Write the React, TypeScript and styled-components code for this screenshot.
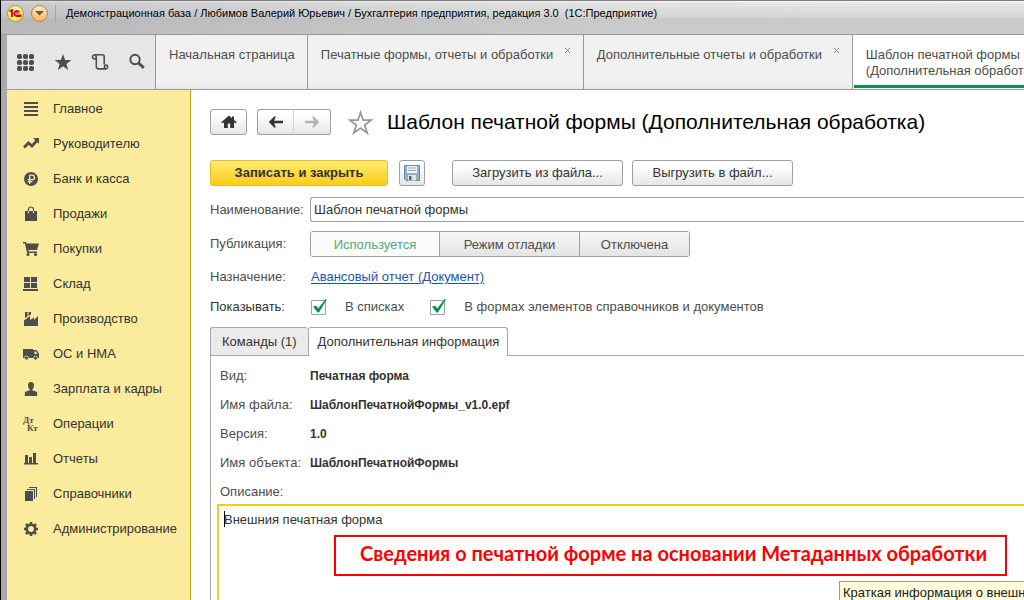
import React from 'react';
import styled, { createGlobalStyle, css } from 'styled-components';

const GlobalStyle = createGlobalStyle`
  *, *::before, *::after { box-sizing: border-box; }
  html, body { margin: 0; padding: 0; overflow: hidden; }
  body, button, input, textarea {
    font-family: "Liberation Sans", Arial, sans-serif;
    font-size: 13px;
    line-height: 16px;
  }
  body { color: #4d4d4d; background: #fff; }
`;

const Window = styled.div`
  display: flex;
  flex-direction: column;
  height: 100vh;
  overflow: hidden;
  border-left: 1px solid #000;
  background: #fff;
`;

const TitleBar = styled.header`
  display: flex;
  align-items: center;
  flex: none;
  height: 35px;
  padding: 0 6px 9px;
  border-top: 1px solid #807c80;
  border-bottom: 1px solid #979797;
  background:
    linear-gradient(90deg, rgba(150, 150, 156, 0.35), rgba(200, 200, 200, 0.12) 60%, rgba(255, 255, 255, 0)),
    linear-gradient(#fff 0, #e8e8e8 2px, #d4d5d5 17px, #c8c9c9 17px, #cdcdcd 100%);
`;

const RoundButton = styled.button<{ $kind: 'logo' | 'menu' }>`
  display: flex;
  align-items: center;
  justify-content: center;
  flex: none;
  width: 17px;
  height: 17px;
  padding: 0;
  margin-right: 7px;
  border-radius: 50%;
  border: 1px solid ${(p) => (p.$kind === 'logo' ? '#b98a4e' : '#b08050')};
  background: ${(p) =>
    p.$kind === 'logo'
      ? 'radial-gradient(circle at 50% 35%, #fffbc4, #ffe93d 80%)'
      : 'linear-gradient(#ffe9c8, #fbb65c)'};
`;

const TitleDivider = styled.span`
  width: 1px;
  height: 17px;
  margin-right: 10px;
  background: #a5a5a5;
`;

const WindowTitle = styled.span`
  font-size: 11px;
  color: #000;
  white-space: pre;
`;

const Client = styled.div`
  display: flex;
  flex-direction: column;
  flex: 1;
  min-height: 0;
  border-left: 6px solid #aaa8ab;
`;

const TopBar = styled.div`
  display: flex;
  flex: none;
  height: 55px;
  border-bottom: 1px solid #9a9a9a;
  background: #f0f0f0;
`;

const Tools = styled.div`
  display: flex;
  align-items: center;
  justify-content: space-around;
  flex: none;
  width: 149px;
  border-right: 1px solid #9a9a9a;
  background: #e6e6e6;
`;

const ToolButton = styled.button`
  display: flex;
  align-items: center;
  justify-content: center;
  width: 36px;
  height: 36px;
  padding: 0;
  border: 0;
  background: none;
  color: #4d4d4d;
`;

const OpenTabs = styled.nav`
  display: flex;
  flex: 1;
  min-width: 0;
  overflow: hidden;
`;

const OpenTab = styled.div<{ $width: number; $active?: boolean }>`
  display: flex;
  justify-content: space-between;
  flex: 0 0 ${(p) => p.$width}px;
  padding: 12px 12px 0 13px;
  border-right: 1px solid #9a9a9a;
  color: #4d4d4d;
  background: linear-gradient(#f1f1f1 90%, #e6e6e6);
  ${(p) =>
    p.$active &&
    css`
      background: #fff;
      box-shadow: inset 1px -1px 0 #fff, inset 1px -4px 0 #009646;
    `}
`;

const TabLink = styled.a`
  color: inherit;
  text-decoration: none;
  white-space: pre;
`;

const CloseButton = styled.button`
  display: flex;
  width: 7px;
  height: 7px;
  padding: 0;
  border: 0;
  background: none;
`;

const Workspace = styled.div`
  display: flex;
  flex: 1;
  min-height: 0;
`;

const Sidebar = styled.nav`
  flex: none;
  width: 184px;
  padding-top: 1px;
  border-right: 1px solid #b9a30c;
  background: #faec9c;
`;

const SideItem = styled.a`
  display: flex;
  align-items: center;
  height: 35px;
  padding-left: 16px;
  color: #333;
  text-decoration: none;

  svg {
    margin-right: 14px;
    color: #4d4d4d;
  }
`;

const Form = styled.main`
  display: flex;
  flex-direction: column;
  flex: 1;
  min-width: 0;
  padding: 19px 0 0 19px;
`;

const HeadRow = styled.div`
  display: flex;
  align-items: center;
  height: 26px;
  margin-bottom: 25px;
`;

const Button = styled.button`
  display: flex;
  align-items: center;
  justify-content: center;
  height: 26px;
  padding: 0 20px;
  border: 1px solid #a0a0a0;
  border-radius: 3px;
  color: #333;
  background: linear-gradient(#fff 20%, #e6e6e6);
  white-space: nowrap;
`;

const HomeButton = styled(Button)`
  width: 37px;
  padding: 0;
  margin-right: 10px;
`;

const NavGroup = styled.div`
  display: flex;
  margin-right: 17px;
`;

const NavButton = styled(Button)<{ $side: 'left' | 'right' }>`
  width: 37px;
  padding: 0;
  ${(p) =>
    p.$side === 'left'
      ? 'border-radius: 3px 0 0 3px; border-right-color: #d4d4d4;'
      : 'border-radius: 0 3px 3px 0; border-left: 0;'}
`;

const StarButton = styled(ToolButton)`
  width: 25px;
  height: 26px;
  margin-right: 14px;
`;

const Heading = styled.h1`
  margin: 0;
  font-size: 21px;
  font-weight: 400;
  line-height: 26px;
  color: #000;
  white-space: nowrap;
`;

const CommandRow = styled.div`
  display: flex;
  margin-bottom: 11px;
`;

const PrimaryButton = styled(Button)`
  width: 178px;
  margin-right: 11px;
  border-color: #f2bb1c;
  font-weight: 700;
  background: linear-gradient(#ffec70, #fbcb1b);
`;

const SaveButton = styled(Button)`
  width: 26px;
  padding: 0;
  margin-right: 27px;
`;

const FileButton = styled(Button)<{ $width: number }>`
  width: ${(p) => p.$width}px;
  margin-right: 9px;
`;

const Field = styled.div<{ $height: number; $gap?: number }>`
  display: flex;
  align-items: center;
  flex: none;
  height: ${(p) => p.$height}px;
  margin-bottom: ${(p) => p.$gap ?? 0}px;
`;

const labelStyle = css`
  flex: none;
  width: 100px;
  white-space: nowrap;
`;

const Label = styled.label`
  ${labelStyle}
`;

const Caption = styled.span<{ $dark?: boolean }>`
  ${labelStyle}
  color: ${(p) => (p.$dark ? '#333' : 'inherit')};
`;

const TextInput = styled.input`
  flex: 1;
  min-width: 0;
  height: 25px;
  padding: 0 3px;
  border: 1px solid #a0a0a0;
  border-right: 0;
  border-radius: 3px 0 0 3px;
  color: #333;
  background: #fff;
  outline: 0;
`;

const Segments = styled.div`
  display: flex;
  border: 1px solid #a0a0a0;
  border-radius: 3px;
  overflow: hidden;
`;

const Segment = styled.button<{ $width: number; $selected?: boolean }>`
  width: ${(p) => p.$width}px;
  height: 24px;
  padding: 2px 0 0;
  border: 0;
  color: ${(p) => (p.$selected ? '#4fad79' : '#4d4d4d')};
  background: ${(p) => (p.$selected ? '#fbfbfb' : 'linear-gradient(#f7f7f7, #e4e4e4)')};

  & + & { border-left: 1px solid #a0a0a0; }
`;

const DocumentLink = styled.a`
  margin-left: 1px;
  color: #1a55b5;
  text-decoration: underline;
  text-underline-offset: 2px;
`;

const CheckLabel = styled.label`
  display: flex;
  align-items: center;
  margin: 0 25px 0 1px;
  white-space: nowrap;
`;

const CheckBox = styled.span`
  position: relative;
  display: flex;
  margin-right: 19px;

  svg {
    position: absolute;
    left: 0;
    top: -2px;
    pointer-events: none;
  }
`;

const CheckInput = styled.input`
  appearance: none;
  width: 15px;
  height: 15px;
  margin: 0;
  border: 1px solid #a0a0a0;
  border-radius: 1px;
  background: #fff;
`;

const PageTabs = styled.div`
  display: flex;
  flex: none;
  border-bottom: 1px solid #a8a8a8;
`;

const PageTab = styled.button<{ $active?: boolean }>`
  height: 28px;
  padding: 0 11px;
  border: 1px solid #a8a8a8;
  border-bottom: 0;
  border-radius: 3px 3px 0 0;
  color: #333;
  background: #ebebeb;

  &:first-child { border-right: 0; }

  ${(p) =>
    p.$active &&
    css`
      height: 29px;
      padding: 0 8px 0 9px;
      margin-bottom: -1px;
      background: #fff;
    `}
`;

const TabPanel = styled.section`
  display: flex;
  flex-direction: column;
  flex: 1;
  min-height: 0;
  padding: 5px 0 0 6px;
  border-left: 1px solid #a8a8a8;
`;

const Details = styled.dl`
  flex: none;
  margin: 0;
  padding-left: 3px;
`;

const Detail = styled.div`
  display: flex;
  align-items: center;
  height: 29px;

  dt { flex: none; width: 90px; white-space: nowrap; }
  dd { margin: 0; font-size: 12px; font-weight: 700; color: #333; }
`;

const DescriptionLabel = styled.label`
  flex: none;
  height: 27px;
  padding: 7px 0 0 3px;
`;

const DescriptionBox = styled.div`
  position: relative;
  display: flex;
  flex: 1;
  min-height: 0;
`;

const Description = styled.textarea`
  flex: 1;
  min-width: 0;
  padding: 6px 5px;
  border: 2px solid #facb1f;
  border-right: 0;
  border-bottom: 0;
  color: #333;
  background: #fff;
  resize: none;
  outline: 0;
`;

const Caret = styled.span`
  position: absolute;
  left: 7px;
  top: 7px;
  width: 1px;
  height: 16px;
  background: #000;
`;

const Callout = styled.div`
  position: absolute;
  left: 117px;
  top: 31px;
  padding: 3px 18px 8px 24px;
  border: 2px solid #f00;
  font-family: Lato, "Open Sans", sans-serif;
  font-size: 20px;
  font-weight: 700;
  line-height: 26px;
  color: #f00;
  background: #fff;
  white-space: nowrap;
`;

const Tooltip = styled.div`
  position: absolute;
  left: 622px;
  top: 77px;
  padding: 3px;
  border: 1px solid #a09c80;
  color: #1a1a1a;
  background: #fffbdc;
  white-space: nowrap;
`;

const Icon = ({ size = 16, children }: { size?: number; children: React.ReactNode }) => (
  <svg width={size} height={size} viewBox={`0 0 ${size} ${size}`} fill="currentColor" aria-hidden="true">
    {children}
  </svg>
);

const stroke = (width: number) => ({ fill: 'none', stroke: 'currentColor', strokeWidth: width });

const GridIcon = () => (
  <Icon size={18}>
    {[2, 8, 14].map((y) =>
      [2, 8, 14].map((x) => <rect key={`${x}-${y}`} x={x - 2} y={y - 1} width={5} height={5} rx={1.8} />)
    )}
  </Icon>
);

const StarIcon = () => (
  <Icon size={18}>
    <path d="M9 1l2.1 5.9 6.2.1-4.9 3.9 1.8 6L9 13.3 3.8 16.9l1.8-6L.7 7l6.2-.1z" />
  </Icon>
);

const HistoryIcon = () => (
  <Icon size={18}>
    <path
      {...stroke(1.6)}
      d="M4.6 5.6C2.6 6.4 1 5 1.6 3.3C2 1.9 3.2 1.7 4.2 1.7H11.4C12.6 1.7 13.2 2.5 13.2 3.6V11.6M4.3 2C5.2 2.6 5.3 3.4 5.3 4.6V13.6C5.3 15.2 6.2 15.9 7.6 15.9H14.4C16.6 15.9 17.2 13.9 16.3 12.7C15.5 11.6 13.6 11.9 13.5 13.3C13.4 14.5 13.8 15.3 14.4 15.9"
    />
  </Icon>
);

const SearchIcon = () => (
  <Icon size={18}>
    <circle cx="7" cy="6.5" r="4.7" {...stroke(1.9)} />
    <path d="M10.5 10l5.3 4.9" {...stroke(2.8)} />
  </Icon>
);

const CloseIcon = () => (
  <svg width="7" height="7" viewBox="0 0 7 7" aria-hidden="true">
    <path d="M1 1l5 5M6 1L1 6" stroke="#8a8a8a" strokeWidth="1" />
  </svg>
);

const sections: { title: string; icon: React.ReactNode }[] = [
  { title: 'Главное', icon: <path d="M1 1h14v2H1zM1 5h14v2H1zM1 9h14v2H1zM1 13h14v2H1z" /> },
  {
    title: 'Руководителю',
    icon: (
      <>
        <path d="M1 11.500l4.500-4.500 3.500 3 4.500-5" {...stroke(2.8)} />
        <path d="M10 2H16v6z" />
      </>
    ),
  },
  {
    title: 'Банк и касса',
    icon: (
      <>
        <circle cx="8" cy="8" r="7" />
        <path d="M6.700 13V4.200h2.500a2.200 2.200 0 0 1 0 4.500H4.700M4.700 10.700h4.600" fill="none" stroke="#faec9c" strokeWidth="1.300" />
      </>
    ),
  },
  {
    title: 'Продажи',
    icon: (
      <>
        <path d="M2 5h12v10H2z" />
        <path d="M5.500 5V3.500a2.500 2.500 0 0 1 5 0V5" {...stroke(1.200)} />
        <path d="M5.500 5v2.200M10.500 5v2.200" stroke="#faec9c" strokeWidth="1.100" />
      </>
    ),
  },
  {
    title: 'Покупки',
    icon: (
      <>
        <path d="M0 1h3l.6 1.500H16L14 9H5.300l.4 1.500H14V12H4L2 2.400H0z" />
        <circle cx="5" cy="13.500" r="1.600" />
        <circle cx="12.500" cy="13.500" r="1.600" />
      </>
    ),
  },
  { title: 'Склад', icon: <path d="M1 1h6v5H1zM8 1h6v5H8zM1 7h6v5H1zM8 7h6v5H8zM0 13h15v2H0z" /> },
  {
    title: 'Производство',
    icon: (
      <>
        <path d="M1 15V9.500L7 5v4l4-2.500V9l4-4v10z" />
        <path d="M2 1h2.500v4.500L2 7zM5.500 1H8v2.500L5.500 5z" />
      </>
    ),
  },
  {
    title: 'ОС и НМА',
    icon: (
      <>
        <path fillRule="evenodd" d="M0 3h10v1h3.500L16 7.500V12H0zM11.500 5.500V8h3L13 5.500z" />
        <circle cx="3.500" cy="12" r="2" stroke="#faec9c" strokeWidth=".7" />
        <circle cx="12.500" cy="12" r="2" stroke="#faec9c" strokeWidth=".7" />
      </>
    ),
  },
  {
    title: 'Зарплата и кадры',
    icon: <path d="M8 1c2.100 0 3 1.400 3 3.200C11 6 10.200 7.800 9.300 8.300v1l3.700 1.200c.9.300 1.200 1 1.200 2.200V15H1.800v-2.300c0-1.200.3-1.900 1.200-2.200l3.700-1.200v-1C5.800 7.800 5 6 5 4.200 5 2.400 5.900 1 8 1z" />,
  },
  {
    title: 'Операции',
    icon: (
      <g fontFamily="Liberation Serif, serif" fontWeight="700" fontSize="9">
        <text x="0" y="7">Дт</text>
        <text x="4" y="15">Кт</text>
      </g>
    ),
  },
  { title: 'Отчеты', icon: <path d="M2 4h3v8H2zM6 6h3v6H6zM10 2h3v10h-3zM1 12h14v1.500H1z" /> },
  {
    title: 'Справочники',
    icon: (
      <>
        <path d="M2 5h8v10H2z" />
        <path d="M4 3.500h7.500V13M6 1.500h7.500V11" {...stroke(1.100)} />
      </>
    ),
  },
  {
    title: 'Администрирование',
    icon: (
      <>
        <circle cx="8" cy="8" r="4.200" {...stroke(2.600)} />
        <path d="M8 1v2.500M8 12.500V15M1 8h2.500M12.500 8H15M3 3l1.800 1.800M11.200 11.200L13 13M13 3l-1.800 1.800M4.800 11.200L3 13" {...stroke(2.600)} />
      </>
    ),
  },
];

const openTabs = [
  { title: 'Начальная страница', width: 150 },
  { title: 'Печатные формы, отчеты и обработки', width: 276, closable: true },
  { title: 'Дополнительные отчеты и обработки', width: 269, closable: true },
  { title: 'Шаблон печатной формы\n(Дополнительная обработка)', width: 276, active: true },
];

const details = [
  ['Вид:', 'Печатная форма'],
  ['Имя файла:', 'ШаблонПечатнойФормы_v1.0.epf'],
  ['Версия:', '1.0'],
  ['Имя объекта:', 'ШаблонПечатнойФормы'],
];

const Check = ({ id, children }: { id: string; children: string }) => (
  <CheckLabel htmlFor={id}>
    <CheckBox>
      <CheckInput id={id} type="checkbox" defaultChecked />
      <svg width="18" height="18" viewBox="0 0 18 18" aria-hidden="true">
        <path d="M2 8.500l3.200-.8 2 2.800L14.600 1l1.300.3L8 14.500H6.600z" fill="#009646" />
      </svg>
    </CheckBox>
    {children}
  </CheckLabel>
);

export default function App() {
  return (
    <>
      <GlobalStyle />
      <Window>
        <TitleBar>
          <RoundButton $kind="logo" aria-label="1С">
            <svg width="13" height="9" viewBox="0 0 13 9" aria-hidden="true">
              <path d="M.5 2.500L3 1v7M10 3.200A2.500 2.500 0 1 0 7.500 7H12.500" fill="none" stroke="#e3001b" strokeWidth="1.900" />
              <path d="M9.500 4.300A1.100 1.100 0 1 0 8 5.200h4.500" fill="none" stroke="#e3001b" strokeWidth=".8" />
            </svg>
          </RoundButton>
          <RoundButton $kind="menu" aria-label="Меню">
            <svg width="9" height="6" viewBox="0 0 9 6" aria-hidden="true">
              <path d="M0 1h9L4.500 5.500z" fill="#6b5a48" />
            </svg>
          </RoundButton>
          <TitleDivider />
          <WindowTitle>
            {'Демонстрационная база / Любимов Валерий Юрьевич / Бухгалтерия предприятия, редакция 3.0  (1С:Предприятие)'}
          </WindowTitle>
        </TitleBar>
        <Client>
          <TopBar>
            <Tools>
              <ToolButton aria-label="Меню функций"><GridIcon /></ToolButton>
              <ToolButton aria-label="Избранное"><StarIcon /></ToolButton>
              <ToolButton aria-label="История"><HistoryIcon /></ToolButton>
              <ToolButton aria-label="Поиск"><SearchIcon /></ToolButton>
            </Tools>
            <OpenTabs>
              {openTabs.map((tab) => (
                <OpenTab key={tab.title} $width={tab.width} $active={tab.active}>
                  <TabLink href="#">{tab.title}</TabLink>
                  {tab.closable && <CloseButton aria-label="Закрыть"><CloseIcon /></CloseButton>}
                </OpenTab>
              ))}
            </OpenTabs>
          </TopBar>
          <Workspace>
            <Sidebar>
              {sections.map((s) => (
                <SideItem key={s.title} href="#">
                  <Icon>{s.icon}</Icon>
                  {s.title}
                </SideItem>
              ))}
            </Sidebar>
            <Form>
              <HeadRow>
                <HomeButton aria-label="Домой">
                  <Icon><path d="M8 1.500L.3 8.300l1 1L3 8.500V14h3.800v-4.500h2.400V14H13V8.500l1.700.8 1-1L13 5.900V2.500h-2v1.700z" /></Icon>
                </HomeButton>
                <NavGroup>
                  <NavButton $side="left" aria-label="Назад">
                    <Icon><path d="M.8 8l5.400-5.500h1.600L6.200 6.700H15v2.600H6.200l1.600 4.200H6.200z" /></Icon>
                  </NavButton>
                  <NavButton $side="right" aria-label="Вперед" disabled>
                    <Icon><path fill="#b3b3b3" d="M15.200 8L9.800 2.500H8.200l1.600 4.200H1v2.600h8.800l-1.600 4.200h1.600z" /></Icon>
                  </NavButton>
                </NavGroup>
                <StarButton aria-label="В избранное">
                  <svg width="25" height="25" viewBox="0 0 25 25" aria-hidden="true">
                    <path d="M12.500 2.500l2.600 7.700h7.900l-6.300 4.900 2.500 7.900-6.700-4.900L5.800 23l2.500-7.900L2 10.200h7.900z" fill="#fff" stroke="#999" strokeWidth="1.800" />
                  </svg>
                </StarButton>
                <Heading>Шаблон печатной формы (Дополнительная обработка)</Heading>
              </HeadRow>
              <CommandRow>
                <PrimaryButton>Записать и закрыть</PrimaryButton>
                <SaveButton aria-label="Записать">
                  <Icon>
                    <path d="M.5.500h15v15H2L.5 14z" fill="#93b1c6" stroke="#6d8ba0" />
                    <path d="M3 1h10v7H3z" fill="#eef4f8" />
                    <path d="M4 3h8M4 5.500h8" stroke="#86a6bd" />
                    <path d="M4 10h8v5.500H4z" fill="#dfe6ea" />
                    <path d="M5 11h2.500v4H5z" fill="#4f6a7d" />
                  </Icon>
                </SaveButton>
                <FileButton $width={171}>Загрузить из файла...</FileButton>
                <FileButton $width={161}>Выгрузить в файл...</FileButton>
              </CommandRow>
              <Field $height={25} $gap={9}>
                <Label htmlFor="name">Наименование:</Label>
                <TextInput id="name" defaultValue="Шаблон печатной формы" />
              </Field>
              <Field $height={26} $gap={5}>
                <Caption>Публикация:</Caption>
                <Segments role="group" aria-label="Публикация">
                  <Segment $width={128} $selected>Используется</Segment>
                  <Segment $width={140}>Режим отладки</Segment>
                  <Segment $width={110}>Отключена</Segment>
                </Segments>
              </Field>
              <Field $height={30}>
                <Caption>Назначение:</Caption>
                <DocumentLink href="#">Авансовый отчет (Документ)</DocumentLink>
              </Field>
              <Field $height={30} $gap={5}>
                <Caption $dark>Показывать:</Caption>
                <Check id="in-lists">В списках</Check>
                <Check id="in-forms">В формах элементов справочников и документов</Check>
              </Field>
              <PageTabs role="tablist">
                <PageTab role="tab" aria-selected="false">Команды (1)</PageTab>
                <PageTab role="tab" aria-selected="true" $active>Дополнительная информация</PageTab>
              </PageTabs>
              <TabPanel role="tabpanel">
                <Details>
                  {details.map(([term, value]) => (
                    <Detail key={term}>
                      <dt>{term}</dt>
                      <dd>{value}</dd>
                    </Detail>
                  ))}
                </Details>
                <DescriptionLabel htmlFor="description">Описание:</DescriptionLabel>
                <DescriptionBox>
                  <Description id="description" defaultValue="Внешния печатная форма" />
                  <Caret />
                  <Callout>Сведения о печатной форме на основании Метаданных обработки</Callout>
                  <Tooltip role="tooltip">Краткая информация о внешней</Tooltip>
                </DescriptionBox>
              </TabPanel>
            </Form>
          </Workspace>
        </Client>
      </Window>
    </>
  );
}
